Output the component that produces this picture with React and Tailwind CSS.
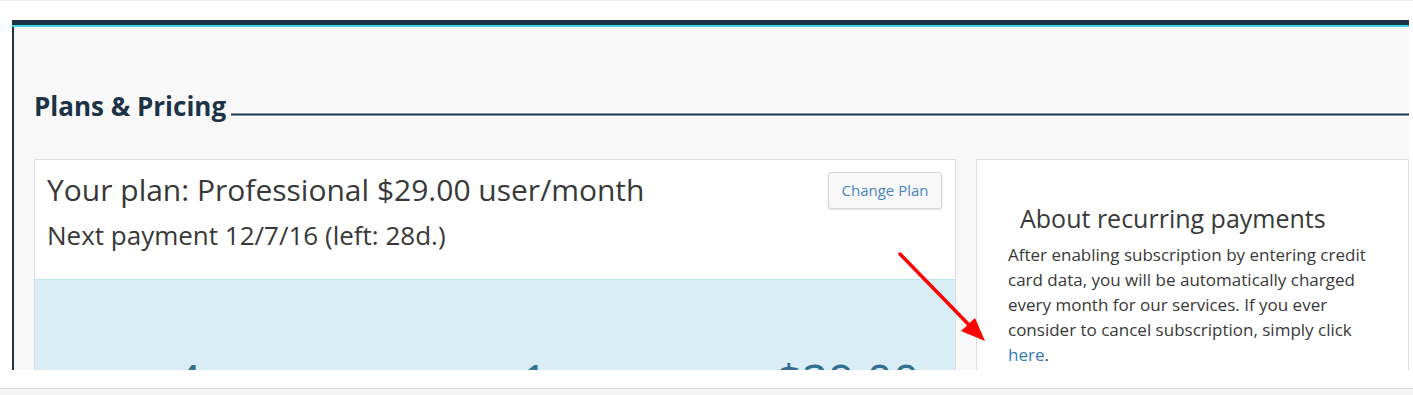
export default function App() {
  return (
    <div className="relative w-[1413px] h-[395px] overflow-hidden bg-white font-['Open_Sans',sans-serif] flex flex-col">
      <div className="h-[1px] bg-[#ececec]" />
      <div className="h-[19px]" />

      <div className="ml-[12px] w-[1397px] h-[350px] flex flex-col">
        <div className="h-[5px] bg-[#1c3347]" />
        <div className="h-[2px] bg-[#3fd5df]" />
        <div className="flex-1 min-h-0 border-l-2 border-[#1c3347] bg-[#f8f8f8] overflow-hidden pl-[20px] pt-[62px]">
          <div className="flex items-end">
            <h2 className="text-[26px] leading-[34px] font-bold text-[#1c3347] whitespace-nowrap">Plans &amp; Pricing</h2>
            <div className="flex-1 ml-[5px] mb-[7px] h-[3px] bg-[#1c3347] border-y border-[#8a99a6]" />
          </div>

          <div className="mt-[36px] flex gap-[20px]">
            <div className="w-[922px] shrink-0 bg-white border border-[#dddddd] flex flex-col">
              <div className="h-[119px] pl-[12px] pr-[13px] pt-[11px] flex justify-between">
                <div className="text-[#383838]">
                  <div className="text-[30px] leading-[38px] whitespace-nowrap">Your plan: Professional $29.00 user/month</div>
                  <div className="text-[26px] leading-[34px] mt-[9px] whitespace-nowrap">Next payment 12/7/16 (left: 28d.)</div>
                </div>
                <button className="mt-[1px] w-[114px] h-[37px] shrink-0 rounded-[3px] border border-[#d5d5d5] bg-[#f8f8f8] shadow-[0_1px_2px_rgba(0,0,0,0.12)] text-[15px] text-[#4a85bf]">
                  Change Plan
                </button>
              </div>
              <div className="h-[120px] bg-[#d9edf7] border-t border-[#bce8f1] flex text-[46px] leading-[56px] text-[#31708f] pt-[72px]">
                <span className="ml-[140px]">4</span>
                <span className="ml-[320px]">1</span>
                <span className="ml-[228px]">$29.00</span>
              </div>
            </div>

            <div className="flex-1 bg-white border border-[#dddddd] pl-[31px] pr-[10px] pt-[42px]">
              <h3 className="pl-[12px] text-[25px] leading-[32px] text-[#383838] whitespace-nowrap">About recurring payments</h3>
              <p className="mt-[8px] w-[376px] text-[17px] leading-[25px] text-[#383838]">
                After enabling subscription by entering credit card data, you will be automatically charged every month for our services. If you ever consider to cancel subscription, simply click{' '}
                <a className="text-[#337ab7]">here</a>.
              </p>
            </div>
          </div>
        </div>
      </div>

      <div className="h-[18px]" />
      <div className="flex-1 border-t border-[#dcdcdc] bg-[#f4f4f4]" />

      <svg className="absolute left-0 top-0 pointer-events-none" width="1413" height="395">
        <line x1="900" y1="254" x2="973" y2="329" stroke="#ff0000" strokeWidth="3.5" strokeLinecap="round" />
        <polygon points="985,341 961,331 975,318" fill="#ff0000" />
      </svg>
    </div>
  );
}
